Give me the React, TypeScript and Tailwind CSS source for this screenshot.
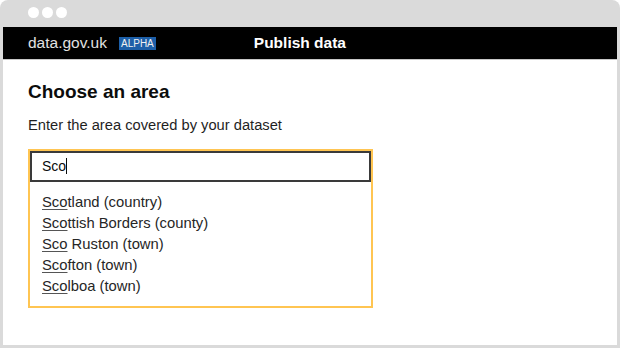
import React from "react";

const results = [
  { match: "Sco", rest: "tland (country)" },
  { match: "Sco", rest: "ttish Borders (county)" },
  { match: "Sco", rest: " Ruston (town)" },
  { match: "Sco", rest: "fton (town)" },
  { match: "Sco", rest: "lboa (town)" },
];

const App = () => {
  return (
    <div
      className="w-[620px] h-[348px] bg-[#dadada] rounded-t-[8px] flex flex-col px-[3px] pb-[3px]"
      style={{ fontFamily: '"Liberation Sans", Arial, sans-serif' }}
    >
      {/* browser chrome */}
      <div className="h-[27px] flex items-center gap-[3px] pl-[25px] pb-[3px] shrink-0">
        <span className="w-[11px] h-[11px] rounded-full bg-white" />
        <span className="w-[11px] h-[11px] rounded-full bg-white" />
        <span className="w-[11px] h-[11px] rounded-full bg-white" />
      </div>

      {/* site header */}
      <div className="h-[32px] bg-black flex items-center pl-[25px] shrink-0">
        <span className="text-[15.5px] text-[#e2e2e2]">data.gov.uk</span>
        <span className="ml-[12px] bg-[#1d5fa8] text-[#f0f0f0] text-[10px] leading-[13px] px-[2px]">
          ALPHA
        </span>
        <span className="ml-[98px] text-[15.5px] font-bold text-white">Publish data</span>
      </div>

      {/* page body */}
      <div className="flex-1 bg-white border-t border-[#c8c8c8] pl-[25px] pt-[20px]">
        <h1 className="text-[19px] leading-[24px] font-bold text-[#0b0c0c]">Choose an area</h1>
        <p className="mt-[11px] text-[14.7px] leading-[20px] text-[#1f1f1f]">
          Enter the area covered by your dataset
        </p>

        <div className="mt-[14px] w-[345px] border-2 border-[#ffc552]">
          <div className="h-[31px] border-2 border-[#3a3a3a] pl-[10px] text-[14px] leading-[20px] text-[#0b0c0c] flex items-start pt-[3px]">
            <span>Sco</span>
            <span className="w-px h-[16px] bg-[#0b0c0c] mt-[2px]" />
          </div>
          <ul className="pl-[12px] pt-[10px] pb-[9px]">
            {results.map((r, i) => (
              <li key={i} className="text-[14.8px] leading-[21px] text-[#262626]">
                <span className="underline decoration-[#555] underline-offset-[2px]">{r.match}</span>
                {r.rest}
              </li>
            ))}
          </ul>
        </div>
      </div>
    </div>
  );
};

export default App;
